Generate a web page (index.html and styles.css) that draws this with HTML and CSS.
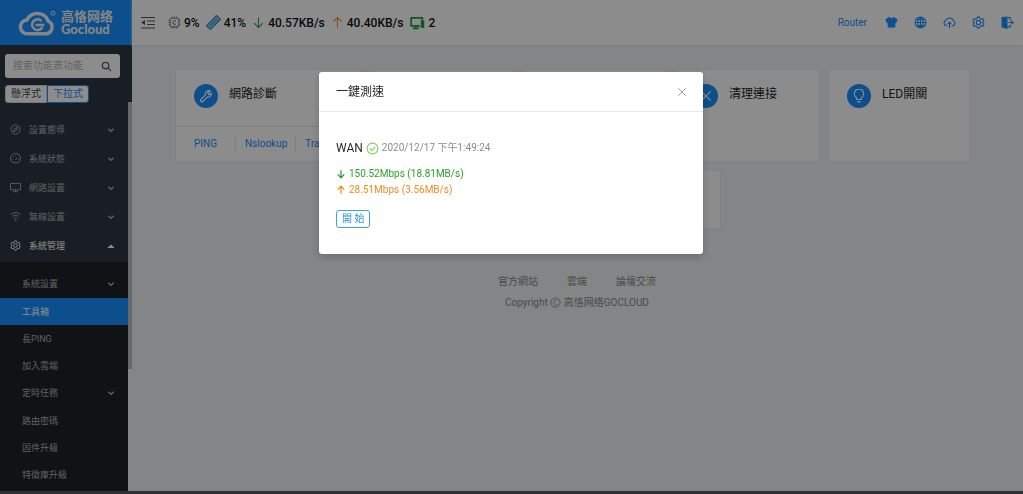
FILE: index.html
```html
<!doctype html>
<html lang="zh-Hant">

<head>
	<meta charset="UTF-8">
	<title>工具箱 - Gocloud</title>
	<link rel="stylesheet" href="styles.css">
</head>

<body>
	<svg class="symbols">
		<symbol id="down" viewBox="0 0 12 12"><path d="M2 4l4 4 4-4"/></symbol>
		<symbol id="gear" viewBox="0 0 24 24"><path d="M10 2h4l1 3 2 1 3-1 2 4-2 2v2l2 2-2 4-3-1-2 1-1 3h-4l-1-3-2-1-3 1-2-4 2-2v-2L2 9l2-4 3 1 2-1z"/><circle cx="12" cy="12" r="4"/></symbol>
		<symbol id="arrow-down" viewBox="0 0 24 24"><path d="M12 3v18M4 13l8 8 8-8"/></symbol>
		<symbol id="arrow-up" viewBox="0 0 24 24"><path d="M12 21V3M4 11l8-8 8 8"/></symbol>
	</svg>
	<div class="layout">
		<aside class="sider">
			<a href="#" class="logo">
				<svg class="logo_cloud" viewBox="0 0 40 28">
					<path d="M10 25h20a7 7 0 0 0 1-13A12 12 0 0 0 9 11a7 7 0 0 0 1 14z" stroke-width="3.6"/>
					<path d="M24 12a5.500 5.500 0 1 0 1 6M18 16h9" stroke-width="2.6"/>
					<circle cx="36" cy="4" r="2" stroke-width="1"/>
				</svg>
				<span class="logo_text"><b class="cn">高恪网络</b><b class="en">Gocloud</b></span>
			</a>
			<div class="search">
				<input type="text" placeholder="搜索功能表功能" aria-label="搜索功能表功能">
				<svg class="search_icon" viewBox="0 0 24 24"><circle cx="10" cy="10" r="7"/><path d="M15 15l7 7"/></svg>
			</div>
			<div class="mode">
				<button type="button">懸浮式</button><button type="button" class="on">下拉式</button>
			</div>
			<nav>
				<ul class="menu">
					<li><a href="#"><svg class="mi" viewBox="0 0 24 24"><circle cx="12" cy="12" r="10"/><path d="M17 7l-3 7-7 3 3-7z"/></svg><span>設置嚮導</span><svg class="caret"><use href="#down"/></svg></a></li>
					<li><a href="#"><svg class="mi" viewBox="0 0 24 24"><path d="M6 21a11 11 0 1 1 12 0zM12 15l4-5M5 13h2M12 5v2M17 14h2M7 8l1 1"/></svg><span>系統狀態</span><svg class="caret"><use href="#down"/></svg></a></li>
					<li><a href="#"><svg class="mi" viewBox="0 0 24 24"><path d="M1 3h22v14H1zM12 17v4M7 21h10"/></svg><span>網路設置</span><svg class="caret"><use href="#down"/></svg></a></li>
					<li><a href="#"><svg class="mi" viewBox="0 0 24 24"><path d="M1 8c6-6 16-6 22 0M5 12c4-4 10-4 14 0M8 16c3-2 5-2 8 0"/><circle cx="12" cy="20" r="1"/></svg><span>無線設置</span><svg class="caret"><use href="#down"/></svg></a></li>
					<li><a href="#" class="open"><svg class="mi"><use href="#gear"/></svg><span>系統管理</span><svg class="caret up" viewBox="0 0 12 12"><path d="M3 8l3-3 3 3z"/></svg></a></li>
				</ul>
				<ul class="submenu">
					<li><a href="#" class="parent"><span>系統設置</span><svg class="caret"><use href="#down"/></svg></a></li>
					<li><a href="#" class="active">工具箱</a></li>
					<li><a href="#">長PING</a></li>
					<li><a href="#">加入雲端</a></li>
					<li><a href="#" class="parent"><span>定時任務</span><svg class="caret"><use href="#down"/></svg></a></li>
					<li><a href="#">路由密碼</a></li>
					<li><a href="#">固件升級</a></li>
					<li><a href="#">特徵庫升級</a></li>
				</ul>
			</nav>
		</aside>
		<div class="scrollbar"></div>
		<div class="main">
			<header class="header">
				<svg class="fold" viewBox="0 0 14 12"><path d="M0 1h14M6 4.500h8M6 8h8M0 11.500h14"/><path class="tri" d="M4 3.500v5L0 6z"/></svg>
				<div class="stats">
					<svg class="cpu" viewBox="0 0 24 24"><rect x="4" y="4" width="16" height="16" rx="3"/><path d="M8 1v3M12 1v3M16 1v3M8 20v3M12 20v3M16 20v3M1 8h3M1 12h3M1 16h3M20 8h3M20 12h3M20 16h3M15 10c-2-3-6-1-6 2s4 5 6 2"/></svg><span>9%</span>
					<svg class="ram" viewBox="0 0 24 24"><path class="board" d="M1 17L17 1l6 6L7 23z"/><path d="M6 15l3 3M9 12l3 3M12 9l3 3M15 6l3 3"/></svg><span>41%</span>
					<svg class="green"><use href="#arrow-down"/></svg><span>40.57KB/s</span>
					<svg class="orange"><use href="#arrow-up"/></svg><span>40.40KB/s</span>
					<svg class="pc" viewBox="0 0 24 24"><path d="M17 17H2V3h19v5M10 17v4M5 21h10"/><path class="solid" d="M20 9h3v10h-3z"/></svg><span>2</span>
				</div>
				<div class="tools">
					<a href="#" class="name">Router</a>
					<a href="#" aria-label="主題"><svg class="solid" viewBox="0 0 24 24"><path d="M8 3c2 3 6 3 8 0l6 4-2 5-2-1v9H6v-9l-2 1-2-5z"/></svg></a>
					<a href="#" aria-label="語言"><svg viewBox="0 0 24 24"><circle cx="12" cy="12" r="10"/><path d="M12 2v20M2 12h20M4 6.500h16M4 17.500h16M12 2c-7 6-7 14 0 20M12 2c7 6 7 14 0 20"/></svg></a>
					<a href="#" aria-label="升級"><svg viewBox="0 0 24 24"><path d="M8 18H6a5 5 0 0 1-1-9.500 7.500 7.500 0 0 1 14 0A5 5 0 0 1 18 18h-2M12 22V12M8.500 15l3.500-3.500 3.500 3.500"/></svg></a>
					<a href="#" aria-label="設置"><svg><use href="#gear"/></svg></a>
					<a href="#" aria-label="登出"><svg viewBox="0 0 24 24"><path class="solid" d="M2 3l9-1v21l-9-3z"/><path d="M12 3h5v5M17 16v4h-5M14 12h8M19 8.500l3.500 3.500-3.500 3.500"/></svg></a>
				</div>
			</header>
			<main class="content">
				<div class="cards">
					<section class="card wide">
						<div class="card_head">
							<i class="round"><svg viewBox="0 0 24 24"><path d="M3 18l8-8c-1-5 3-8 8-7l-4 4 2 3 4-3c1 5-3 8-7 7l-8 8c-3 0-4-2-3-4z"/></svg></i>
							<h3>網路診斷</h3>
						</div>
						<div class="links"><a href="#">PING</a><a href="#">Nslookup</a><a href="#">Tracert</a></div>
					</section>
					<section class="card"></section>
					<section class="card"></section>
					<section class="card">
						<div class="card_head">
							<i class="round"><svg viewBox="0 0 24 24"><path d="M4 4l16 16M20 4L4 20"/></svg></i>
							<h3>清理連接</h3>
						</div>
					</section>
					<section class="card">
						<div class="card_head">
							<i class="round"><svg viewBox="0 0 24 24"><path d="M8 18v-3a8 8 0 1 1 8 0v3zM9 22h6"/></svg></i>
							<h3>LED開關</h3>
						</div>
					</section>
					<section class="card second"></section>
				</div>
				<footer class="footer">
					<div class="footer_links"><a href="#">官方網站</a><a href="#">雲端</a><a href="#">論壇交流</a></div>
					<p>Copyright <svg viewBox="0 0 24 24"><circle cx="12" cy="12" r="10"/><path d="M16 9c-2-4-8-2-8 3s6 7 8 3"/></svg> 高恪网络GOCLOUD</p>
				</footer>
			</main>
		</div>
	</div>
	<div class="mask">
		<div class="modal" role="dialog" aria-labelledby="modal_title">
			<div class="modal_head">
				<h2 id="modal_title">一鍵測速</h2>
				<button type="button" class="close" aria-label="關閉"><svg viewBox="0 0 24 24"><path d="M3 3l18 18M21 3L3 21"/></svg></button>
			</div>
			<div class="modal_body">
				<div class="wan"><span>WAN</span><svg viewBox="0 0 24 24"><circle cx="12" cy="12" r="10"/><path d="M7 12l4 4 6-7"/></svg><time>2020/12/17 下午1:49:24</time></div>
				<div class="speed green"><svg><use href="#arrow-down"/></svg>150.52Mbps (18.81MB/s)</div>
				<div class="speed orange"><svg><use href="#arrow-up"/></svg>28.51Mbps (3.56MB/s)</div>
				<button type="button" class="start">開 始</button>
			</div>
		</div>
	</div>
</body>

</html>
```
FILE: styles.css
```css
* {
	box-sizing: border-box;
}

body {
	margin: 0;
	font: 10px/16px Roboto, "Noto Sans CJK TC", sans-serif;
	color: #262626;
	background: #f0f2f5;
	overflow: hidden;
}

h2,h3,p,ul {
	margin: 0;
	padding: 0;
	font-weight: normal;
}

ul {
	list-style: none;
}

a {
	color: #1890ff;
	text-decoration: none;
}

button,input {
	font: inherit;
}

svg {
	fill: none;
	stroke: currentColor;
	stroke-width: 2;
	flex: none;
}

.symbols {
	display: none;
}

.solid {
	fill: currentColor;
}

.green {
	color: #2ca02c;
}

.orange {
	color: #f08c1e;
}

.layout {
	display: flex;
	height: 100vh;
	border-bottom: 3px solid #555860;
}

/* 左側選單 */
.sider {
	width: 128px;
	flex: none;
	background: #2c3841;
	overflow: hidden;
}

.logo {
	display: flex;
	align-items: center;
	gap: 4px;
	width: 132px;
	height: 45px;
	padding-left: 18px;
	background: #1890ff;
	color: #f0f2f5;
}

.logo_cloud {
	width: 39px;
	height: 28px;
}

.logo_text {
	display: flex;
	flex-direction: column;
}

.logo_text b {
	font-size: 13px;
	line-height: 12px;
}

.logo_text .en {
	font-family: Lato, sans-serif;
	font-weight: 900;
}

.search {
	display: flex;
	align-items: center;
	height: 24px;
	margin: 9px 8px 0 5px;
	padding: 0 8px;
	border-radius: 3px;
	background: #fff;
}

.search input {
	flex: 1;
	min-width: 0;
	padding: 0;
	border: 0;
	outline: 0;
	background: none;
}

.search input::placeholder {
	color: #b4b4b4;
}

.search_icon {
	width: 11px;
	height: 11px;
	color: #666;
	stroke-width: 3;
}

.mode {
	display: flex;
	margin: 7px 0 12px 5px;
}

.mode button {
	height: 18px;
	padding: 0 5px;
	border: 1px solid #d9d9d9;
	border-radius: 3px 0 0 3px;
	background: #fff;
	color: #444;
	line-height: 14px;
}

.mode .on {
	border-color: #1890ff;
	border-radius: 0 3px 3px 0;
	color: #1890ff;
}

.menu {
	padding-bottom: 2px;
}

.menu a,.submenu a {
	display: flex;
	align-items: center;
	font-size: 9px;
	color: #aab0b4;
}

.menu a {
	height: 29px;
	padding: 0 13px 0 10px;
}

.menu span,.submenu span {
	flex: 1;
}

.menu .open {
	color: #fff;
}

.mi {
	width: 11px;
	height: 11px;
	margin-right: 8px;
}

.caret {
	width: 8px;
	height: 8px;
}

.up {
	fill: currentColor;
}

.submenu {
	height: 260px;
	padding-top: 8px;
	background: #1c2329;
}

.submenu a {
	height: 27px;
	padding: 0 13px 0 22px;
}

.submenu .parent {
	height: 28px;
}

.submenu .active {
	background: #1890ff;
	color: #fff;
}

.scrollbar {
	width: 4px;
	flex: none;
	background: linear-gradient(#1890ff 45px, #2c3841 45px, #2c3841 102px, #bcbec2 102px, #bcbec2 369px, #f0f2f5 369px);
}

/* 右側 */
.main {
	flex: 1;
	min-width: 0;
}

.header {
	display: flex;
	align-items: center;
	height: 45px;
	padding: 0 9px;
	background: #fff;
	box-shadow: 0 1px 2px #e0e3e7;
}

.fold {
	width: 14px;
	height: 13px;
	color: #555;
	stroke-width: 1;
}

.fold .tri {
	fill: currentColor;
	stroke: none;
}

.stats {
	display: flex;
	align-items: center;
	gap: 3px;
	margin-left: 13px;
	font-size: 12px;
	font-weight: 500;
	color: #111;
}

.stats svg {
	width: 13px;
	height: 13px;
}

.stats span {
	margin-right: 3px;
}

.stats .cpu {
	color: #888;
}

.stats .ram {
	width: 15px;
	height: 15px;
	color: #2d8fc4;
}

.board {
	fill: #9fd0ea;
}

.stats .pc {
	width: 16px;
	height: 14px;
	color: #17a34a;
	stroke-width: 3;
}

.tools {
	display: flex;
	align-items: center;
	gap: 16px;
	margin-left: auto;
}

.tools a {
	display: flex;
}

.tools .name {
	margin-right: 2px;
}

.tools svg {
	width: 13px;
	height: 13px;
}

.content {
	padding: 25px 54px 0 44px;
}

.cards {
	display: grid;
	grid-template-columns: 184fr 143fr 143fr 143fr 140fr;
	grid-template-rows: 91px 57px;
	gap: 10px;
}

.card {
	min-width: 0;
	background: #fff;
	box-shadow: 0 0 1px #d0d4d8;
}

.card.wide {
	display: flex;
	flex-direction: column;
}

.second {
	grid-column: 2 / 4;
	margin-right: -54px;
}

.card_head {
	display: flex;
	gap: 11px;
	padding: 14px 18px;
}

.card h3 {
	font-size: 12px;
	line-height: 20px;
	white-space: nowrap;
}

.round {
	display: flex;
	align-items: center;
	justify-content: center;
	width: 24px;
	height: 24px;
	flex: none;
	border-radius: 50%;
	background: #1890ff;
	color: #fff;
}

.round svg {
	width: 14px;
	height: 14px;
}

.links {
	display: flex;
	align-items: center;
	margin-top: auto;
	height: 35px;
	border-top: 1px solid #e8e8e8;
	overflow: hidden;
}

.links a {
	padding: 0 18px;
}

.links a + a {
	padding: 0 8px 0 9px;
	border-left: 1px solid #e8e8e8;
}

.footer {
	margin: 46px -9px 0 0;
	text-align: center;
	color: #888;
}

.footer_links {
	display: flex;
	justify-content: center;
	gap: 29px;
	margin-bottom: 5px;
}

.footer a {
	color: #888;
}

.footer svg {
	width: 11px;
	height: 11px;
	vertical-align: -2px;
}

/* 彈窗 */
.mask {
	position: fixed;
	inset: 0;
	padding: 72px 1px 0 0;
	background: rgba(0, 0, 0, .45);
}

.modal {
	width: 384px;
	margin: 0 auto;
	border-radius: 3px;
	background: #fff;
	box-shadow: 0 3px 9px rgba(0, 0, 0, .2);
}

.modal_head {
	display: flex;
	align-items: center;
	justify-content: space-between;
	height: 40px;
	padding: 0 16px 0 17px;
	border-bottom: 1px solid #e8e8e8;
}

.modal h2 {
	font-size: 12px;
}

.close {
	display: flex;
	padding: 0;
	border: 0;
	background: none;
	color: #8c8c8c;
}

.close svg {
	width: 10px;
	height: 10px;
}

.modal_body {
	padding: 28px 17px 26px;
}

.wan {
	display: flex;
	align-items: center;
	gap: 3px;
	margin-bottom: 10px;
	font-size: 12px;
}

.wan svg {
	width: 13px;
	height: 13px;
	color: #7ed05a;
}

.wan time {
	font-size: 10px;
	color: #8c8c8c;
}

.speed {
	display: flex;
	align-items: center;
	gap: 3px;
}

.speed svg {
	width: 10px;
	height: 10px;
	stroke-width: 3;
}

.start {
	height: 18px;
	margin-top: 12px;
	padding: 0 5px;
	border: 1px solid #40a0e8;
	border-radius: 3px;
	background: #fff;
	color: #2b95e6;
	line-height: 14px;
}
```
